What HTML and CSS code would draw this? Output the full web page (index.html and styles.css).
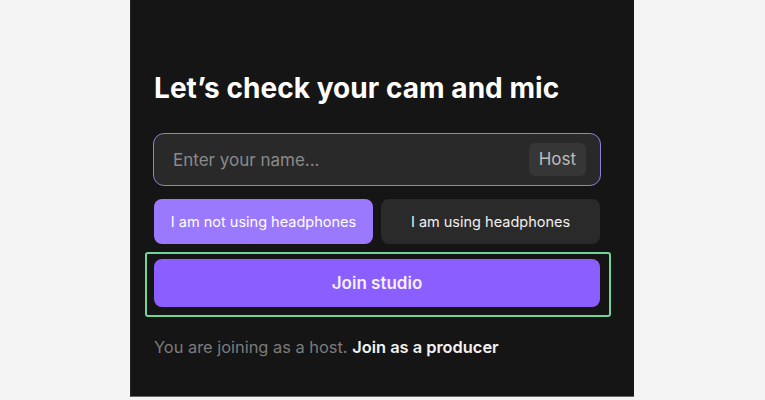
FILE: index.html
```html
<!DOCTYPE html>
<html>
<head>
<meta charset="utf-8">
<link rel="stylesheet" href="styles.css">
</head>
<body>
<div class="panel">
  <div class="content">
    <h1 class="title">Let’s check your cam and mic</h1>
    <div class="name-field">
      <span class="placeholder">Enter your name...</span>
      <span class="role-badge">Host</span>
    </div>
    <div class="toggles">
      <button class="toggle active">I am not using headphones</button>
      <button class="toggle">I am using headphones</button>
    </div>
    <div class="join-wrap">
      <button class="join">Join studio</button>
    </div>
    <p class="footer"><span class="muted">You are joining as a host.</span> <span class="link">Join as a producer</span></p>
  </div>
</div>
</body>
</html>
```
FILE: styles.css
```css
* { box-sizing: border-box; }
html, body { margin: 0; padding: 0; }
body {
  background: #f4f4f4;
  font-family: Inter, "Noto Sans", sans-serif;
  width: 765px;
  height: 400px;
  overflow: hidden;
}
.panel {
  margin-left: 130px;
  width: 504px;
  height: 397px;
  background: #151515;
  border-left: 1px solid #262626;
  border-bottom: 1px solid #6a6a6a;
  padding: 0 0 0 22px;
}
.content {
  width: 448px;
  padding-top: 70px;
}
.title {
  margin: 0 0 27px 1px;
  font-size: 28px;
  line-height: 36px;
  font-weight: 700;
  color: #ffffff;
  letter-spacing: 0.05px;
}
.name-field {
  height: 53px;
  border: 1px solid #8d80d6;
  border-radius: 11px;
  background: #292929;
  display: flex;
  align-items: center;
  justify-content: space-between;
  padding: 0 14px 0 19px;
}
.placeholder {
  color: #8a8a8a;
  font-size: 17px;
}
.role-badge {
  background: #363636;
  color: #bcbcbc;
  font-size: 17px;
  border-radius: 6px;
  padding: 7px 10px;
  line-height: 19px;
}
.toggles {
  display: flex;
  gap: 8px;
  margin: 13px 0 0 1px;
  width: 446px;
}
.toggle {
  flex: 1;
  height: 45px;
  border: none;
  border-radius: 8px;
  background: #2a2a2a;
  color: #f0f0f0;
  font-family: inherit;
  font-size: 14.5px;
  padding: 0;
}
.toggle.active {
  background: #9a79ff;
  color: #ffffff;
}
.join-wrap {
  position: relative;
  margin: 15px 0 0 1px;
  width: 446px;
}
.join-wrap::after {
  content: "";
  position: absolute;
  top: -7px;
  left: -9px;
  right: -11px;
  bottom: -10px;
  border: 2px solid #72d39b;
  border-radius: 3px;
  pointer-events: none;
}
.join {
  display: block;
  width: 100%;
  height: 48px;
  border: none;
  border-radius: 8px;
  background: #8a5eff;
  color: #f4f0ff;
  font-family: inherit;
  font-size: 17px;
  font-weight: 600;
}
.footer {
  margin: 29px 0 0 1px;
  font-size: 16.4px;
  line-height: 22px;
}
.muted { color: #7c7c7c; }
.link { color: #f2f2f2; font-weight: 600; }
```
